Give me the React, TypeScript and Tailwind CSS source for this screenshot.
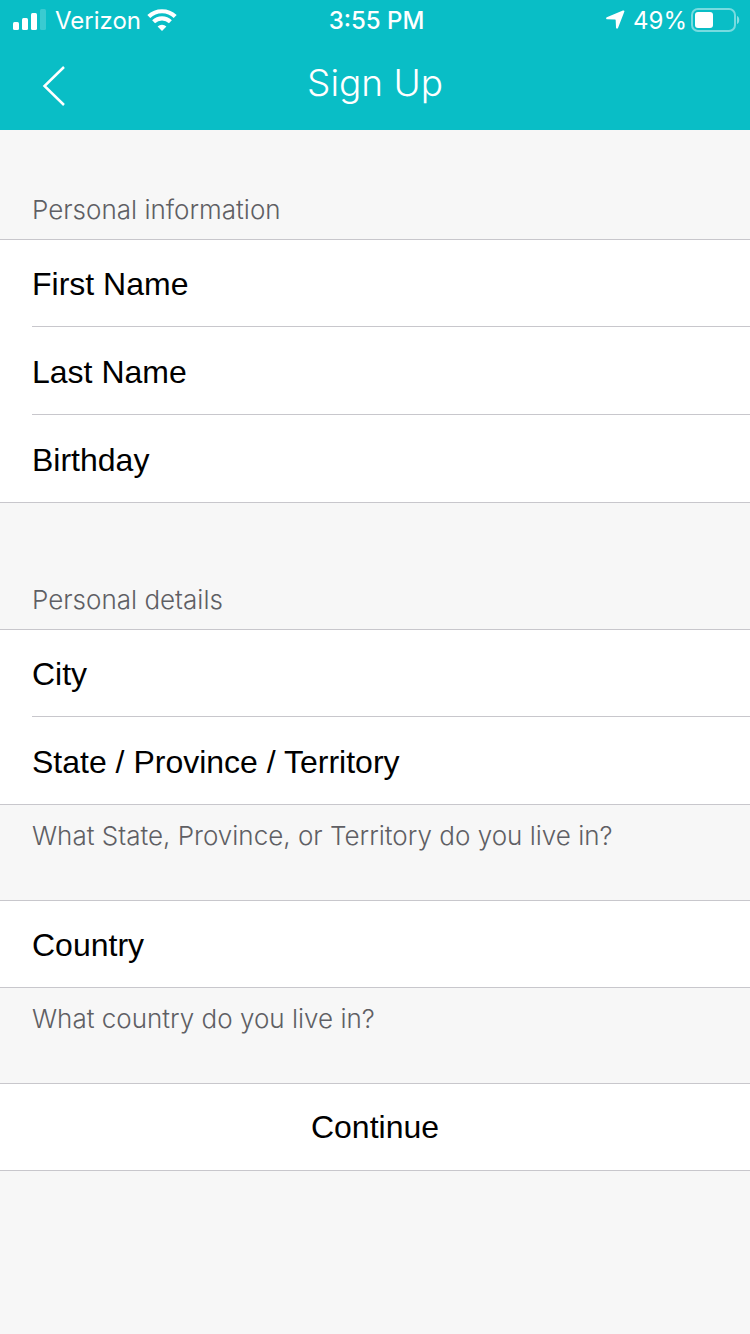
import React from 'react';

interface FieldProps {
  name: string;
  label: string;
  first?: boolean;
  last?: boolean;
}

const Field = ({ name, label, first, last }: FieldProps) => (
  <div className={`h-[88px] bg-white ${first ? 'border-t border-[#c8c7cc]' : ''} ${last ? 'border-b border-[#c8c7cc]' : ''}`}>
    <div className={`ml-8 h-full flex items-center gap-4 pt-0.5 pr-8 ${last ? '' : 'border-b border-[#c8c7cc]'}`}>
      <label htmlFor={name} className="text-[32px] leading-10 text-black whitespace-nowrap">
        {label}
      </label>
      <input id={name} name={name} type="text" className="flex-1 min-w-0 h-full bg-transparent text-[32px] outline-none" />
    </div>
  </div>
);

const Hint = ({ children }: { children: React.ReactNode }) => (
  <p className="h-[95px] px-8 pt-[15px] font-['Inter',sans-serif] text-[26px] leading-8 font-light text-[#5f5f64]">{children}</p>
);

const SectionTitle = ({ children }: { children: React.ReactNode }) => (
  <h2 className="px-8 pb-[13px] font-['Inter',sans-serif] text-[26px] leading-8 font-light text-[#5f5f64]">{children}</h2>
);

const SignalIcon = () => (
  <svg width="34" height="22" viewBox="0 0 34 22" fill="#fff" aria-hidden="true">
    <rect x="0" y="13" width="6" height="8" rx="1.5" />
    <rect x="9" y="9" width="6" height="12" rx="1.5" />
    <rect x="18" y="4" width="6" height="17" rx="1.5" />
    <rect x="27" y="0" width="6" height="21" rx="1.5" opacity="0.2" />
  </svg>
);

const WifiIcon = () => (
  <svg width="30" height="22" viewBox="0 0 30 22" fill="none" stroke="#fff" strokeWidth="4.2" aria-hidden="true">
    <path d="M1.8 7.600a19 19 0 0 1 26.400 0" />
    <path d="M6.600 12.700a12.200 12.200 0 0 1 16.800 0" />
    <path d="M15 22l-4.400-4.400a6.200 6.200 0 0 1 8.800 0z" fill="#fff" stroke="none" />
  </svg>
);

const LocationIcon = () => (
  <svg width="19" height="20" viewBox="0 0 19 20" fill="#fff" aria-hidden="true">
    <path d="M16.900.6C18.100.1 18.700.8 18.300 1.800L12.100 17.800c-.5 1.300-2 1.200-2.100-.2L9.700 10.400c0-.7-.3-1-1-1L1.200 9.200C-.1 9.100-.3 7.700.8 7.200z" />
  </svg>
);

const BatteryIcon = () => (
  <svg width="49" height="24" viewBox="0 0 49 24" fill="none" aria-hidden="true">
    <rect x="1" y="1" width="43" height="22" rx="6" stroke="#fff" strokeOpacity="0.45" strokeWidth="2" />
    <rect x="4" y="4" width="18" height="16" rx="3" fill="#fff" />
    <path d="M46 8c3 1 3 7 0 8z" fill="#fff" fillOpacity="0.5" />
  </svg>
);

const StatusBar = () => (
  <div className="h-10 grid grid-cols-[1fr_auto_1fr] items-center pl-[13px] pr-[10px] font-['Inter',sans-serif] text-2xl leading-8">
    <div className="flex items-center">
      <SignalIcon />
      <span className="ml-2 pt-0.5">Verizon</span>
      <span className="ml-1.5">
        <WifiIcon />
      </span>
    </div>
    <span className="pt-0.5 font-medium">3:55 PM</span>
    <div className="flex items-center justify-end">
      <LocationIcon />
      <span className="ml-2 mr-1 pt-0.5">49%</span>
      <BatteryIcon />
    </div>
  </div>
);

const App = () => {
  return (
    <div className="min-h-screen bg-[#f7f7f7] font-['Liberation_Sans',Arial,sans-serif]">
      <header className="bg-[#09bec6] text-white">
        <StatusBar />
        <div className="h-[90px] grid grid-cols-[1fr_auto_1fr] items-center">
          <button type="button" aria-label="Back" className="justify-self-start ml-10 pt-0.5 cursor-pointer">
            <svg width="28" height="42" viewBox="0 0 28 42" fill="none" stroke="#fff" strokeWidth="2.5" aria-hidden="true">
              <path d="M24 2L4.500 21L24 40" />
            </svg>
          </button>
          <h1 className="font-['Inter',sans-serif] font-light text-[37px] leading-10 pb-1">Sign Up</h1>
        </div>
      </header>
      <form onSubmit={(e) => e.preventDefault()}>
        <section className="pt-16">
          <SectionTitle>Personal information</SectionTitle>
          <Field name="firstName" label="First Name" first />
          <Field name="lastName" label="Last Name" />
          <Field name="birthday" label="Birthday" last />
        </section>
        <section className="pt-[81px]">
          <SectionTitle>Personal details</SectionTitle>
          <Field name="city" label="City" first />
          <Field name="state" label="State / Province / Territory" last />
          <Hint>What State, Province, or Territory do you live in?</Hint>
          <Field name="country" label="Country" first last />
          <Hint>What country do you live in?</Hint>
        </section>
        <button type="submit" className="block w-full h-[88px] bg-white border-y border-[#c8c7cc] text-[32px] leading-10 text-black cursor-pointer">
          Continue
        </button>
      </form>
    </div>
  );
};

export default App;
